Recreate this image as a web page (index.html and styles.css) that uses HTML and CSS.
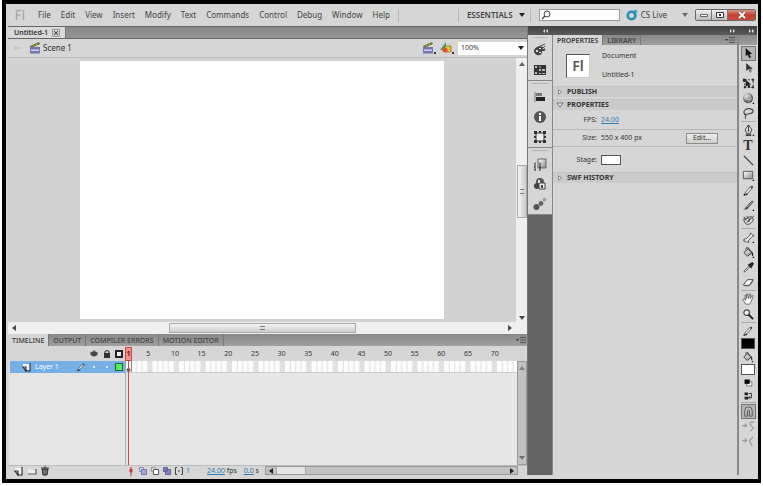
FILE: index.html
```html
<!DOCTYPE html>
<html lang="en">
<head>
<meta charset="utf-8">
<title>Untitled-1</title>
<link rel="stylesheet" href="styles.css">
</head>
<body>
<svg class="defs" aria-hidden="true">
  <defs>
    <radialGradient id="ball" cx=".35" cy=".3" r=".8"><stop offset="0" stop-color="#eee"/><stop offset=".5" stop-color="#888"/><stop offset="1" stop-color="#333"/></radialGradient>
    <linearGradient id="sheen" x2="1" y2="1"><stop offset="0" stop-color="#fff"/><stop offset="1" stop-color="#888"/></linearGradient>
  </defs>
  <symbol id="clap" viewBox="0 0 12 12"><path d="M1 4 10 0l1 2-9 4z" fill="#6b7426"/><path d="M4 3.500 5 4M7 2l1 1" stroke="#c5bd55"/><path d="M1 5h10v6.500H1z" fill="#7774b4"/><path d="M2 7.500h8V9H2z" fill="#d5d2ee"/></symbol>
  <symbol id="shapes" viewBox="0 0 12 12"><path d="M0 8 6 0v8z" fill="#35a06d"/><path d="M5 4h6v6H5z" fill="#ddc52f" stroke="#82721e" stroke-width=".7"/><circle cx="5" cy="8" r="2.5" fill="#e64e2b"/></symbol>
  <symbol id="eye" viewBox="0 0 10 10"><path d="M1 5q4-6 8 0-4 5-8 0z" fill="#444"/><path d="M1 3l2 1M9 3 7 4M5 1v2" stroke="#444" stroke-width=".7"/></symbol>
  <symbol id="lock" viewBox="0 0 10 10"><path d="M3 5V3q2-3 4 0v2" fill="none" stroke="#333" stroke-width="1.2"/><path d="M2 4h6v5H2z" fill="#333"/></symbol>
  <symbol id="page" viewBox="0 0 10 10"><path d="M1 2h7v6H4L1 5z" fill="#f4f4f4"/><path d="M8 1v8H3M1 5h3v4z" fill="none" stroke="#333" stroke-width="1.2"/></symbol>
  <symbol id="folder" viewBox="0 0 10 10"><path d="M1 8V3h3l1 1h4v4z" fill="#eee"/><path d="M1 8h8V3" fill="none" stroke="#555" stroke-width="1.2"/></symbol>
  <symbol id="trash" viewBox="0 0 10 10"><path d="M2 3h6L7 9H3zM1 2h8M4 1h2" fill="#555" stroke="#333"/><path d="M4 4v4M6 4v4" stroke="#bbb" stroke-width=".6"/></symbol>
  <symbol id="pencil" viewBox="0 0 14 14"><path d="M2 12q1-3 7-9l2 1q-4 7-9 8z" fill="#eee" stroke="#444" stroke-width=".9"/><path d="M9 3l2-1 1 1-1 2z" fill="#444"/><path d="M2 12l4-1" stroke="#222" stroke-width="1.3"/></symbol>
  <symbol id="arrow" viewBox="0 0 14 14"><path d="M4 1v9l2-2 2 4 1.600-1L8 7.500h3z" fill="#111"/></symbol>
  <symbol id="subarrow" viewBox="0 0 14 14"><path d="M5 2v7l2-2 2 4 1-1-1.500-3H11z" fill="#eee" stroke="#222" stroke-width=".8"/><path d="M5 2v6l5-1z" fill="#333"/></symbol>
  <symbol id="transform" viewBox="0 0 14 14"><path d="M3 3h9v8H3z" fill="none" stroke="#222" stroke-dasharray="2 1.500"/><path d="M1 2h3v3H1zM11 2h2v2h-2zM11 10h2v2h-2zM2 10h2v2H2z" fill="#222"/><path d="M4 3v8l2-2 1 3 2-1-1-3h2z" fill="#222"/></symbol>
  <symbol id="rotate3d" viewBox="0 0 14 14"><circle cx="6.500" cy="6.500" r="5.500" fill="url(#ball)"/><path d="M2 6q5 4 9 1M7 2q4 4 0 9" fill="none" stroke="#ddd" stroke-width=".7"/><path d="M11 13h2v-2z"/></symbol>
  <symbol id="lasso" viewBox="0 0 14 14"><path d="M3 8C0 4 5 1 9 2s4 4 0 5-5 1-6 1 2 1 1 2-1 1 0 3" fill="none" stroke="#444" stroke-width="1.200"/></symbol>
  <symbol id="pen" viewBox="0 0 14 14"><path d="M7 1 3.500 6 5 10h4l1.500-4z" fill="#eee" stroke="#333"/><path d="M7 1v6" stroke="#333"/><circle cx="7" cy="7" r="1" fill="#333"/><path d="M4 11h6v2H4z" fill="#444"/><path d="M11 13h2v-2z"/></symbol>
  <symbol id="line" viewBox="0 0 14 14"><path d="M2 2l10 10" stroke="#333" stroke-width="1.200"/></symbol>
  <symbol id="rect" viewBox="0 0 14 14"><path d="M1.500 2.500h10v8h-10z" fill="url(#sheen)" stroke="#555"/><path d="M11 13h2v-2z"/></symbol>
  <symbol id="brush" viewBox="0 0 14 14"><path d="M6 7l5-5 1 1-5 6z" fill="#999" stroke="#333" stroke-width=".8"/><path d="M1 11q3 0 3-3l3 1q0 3-6 2z" fill="#444"/><path d="M11 13h2v-2z"/></symbol>
  <symbol id="deco" viewBox="0 0 14 14"><path d="M2 5c2 1 2 0 4-1 3-2 6-1 6 2s-5 6-7 5-3-3-3-6z" fill="#ddd" stroke="#333"/><path d="M13 2 5 9M2 3l3 4M5 2l2 4M9 4l-2 5" stroke="#333" stroke-width=".9"/></symbol>
  <symbol id="bone" viewBox="0 0 14 14"><path d="M2 9l3-1 4-4V2l2 2 2 1-2 1-4 4 0 2-2 0-1-1-2 0z" fill="#eee" stroke="#444"/><path d="M11 13h2v-2z"/></symbol>
  <symbol id="bucket" viewBox="0 0 14 14"><path d="M2 7l5-4 4 4-5 4z" fill="url(#sheen)" stroke="#333"/><path d="M4 4q0-3 3-2l2 4" fill="none" stroke="#333"/><path d="M10 6q4 3 1 5z" fill="#222"/><path d="M11 13h2v-2z"/></symbol>
  <symbol id="dropper" viewBox="0 0 14 14"><path d="M2 12l1-2 5-5 1 1-5 5z" fill="#ddd" stroke="#444" stroke-width=".8"/><path d="M6 4l4 4 1-2 2-3-2-2-3 2z" fill="#222"/></symbol>
  <symbol id="eraser" viewBox="0 0 14 14"><path d="M1.500 9.500 6 4h6l-4 6H2z" fill="#fff" stroke="#333"/><path d="M2 10h6l4-6v2l-4 5H2z" fill="#666"/></symbol>
  <symbol id="hand" viewBox="0 0 14 14"><path d="M4 12 1 7l1-1 2 2-1-5 1-1 1 4 0-5h1l1 5 1-5h1v5l2-4 1 1-2 6-2 3z" fill="#fff" stroke="#555" stroke-width=".9"/></symbol>
  <symbol id="magnify" viewBox="0 0 14 14"><circle cx="5" cy="5" r="3" fill="#eee" stroke="#444" stroke-width="1.200"/><path d="M7 7l5 5" stroke="#222" stroke-width="2"/></symbol>
  <symbol id="bw" viewBox="0 0 14 14"><path d="M5.500 5.500h6v5h-6z" fill="#fff" stroke="#666"/><path d="M3 3h6v5H3z"/></symbol>
  <symbol id="swap" viewBox="0 0 14 14"><path d="M3 3h4v3H3zM3 8h4v3H3z" fill="#222"/><path d="M8 4h3v5H8m1-2L7.500 9 9 11" fill="none" stroke="#222"/></symbol>
  <symbol id="snap" viewBox="0 0 14 14"><path d="M3 12V6q0-4 4-4t4 4v6H8V6Q7 4 6 6v6z" fill="#bbb" stroke="#555"/></symbol>
  <symbol id="smooth" viewBox="0 0 14 14"><path d="M0 6h5M3 4l2 2-2 2M13 2Q7 2 9 5t3 3-3 4" fill="none" stroke="#999" stroke-width="1.200"/></symbol>
  <symbol id="straight" viewBox="0 0 14 14"><path d="M0 6h5M3 4l2 2-2 2M12 2 8 6l3 6" fill="none" stroke="#999" stroke-width="1.200"/></symbol>
  <symbol id="palette" viewBox="0 0 14 14"><path d="M1 8c0-3 5-6 9-4 4 3 2 4 0 4s0 3-3 4-6-1-6-4z" fill="#444"/><path d="M3 7h2v2H3zM6 5h2v1H6zM6 9h2v1H6zM9 5h2v1H9z" fill="#ddd"/><path d="M5 4l7-3M7 8l5-5" stroke="#555"/></symbol>
  <symbol id="swatches" viewBox="0 0 14 14"><path d="M1 2h12v10H1z" fill="#333"/><path d="M2 3h2v2H2zM2 9h2v2H2zM6 6h2v2H6zM9 6h3v2H9zM6 10h2v1H6zM9 10h3v1H9z" fill="#bbb"/><path d="M6 3h2v2H6z" fill="#777"/></symbol>
  <symbol id="align" viewBox="0 0 14 14"><path d="M2 2v10" stroke="#777"/><path d="M3 3h6v3H3z" fill="#777"/><path d="M3 7h9v4H3z" fill="#222"/></symbol>
  <symbol id="info" viewBox="0 0 14 14"><circle cx="7" cy="7" r="6" fill="#555"/><path d="M6 3h2v2H6zM6 6h2v5H6z" fill="#fff"/></symbol>
  <symbol id="box" viewBox="0 0 14 14"><path d="M3 3h8v8H3z" fill="#eee" stroke="#333"/><path d="M1 1h3v3H1zM6 1h2v2H6zM10 1h3v3h-3zM1 6h2v2H1zM11 6h2v2h-2zM1 10h3v3H1zM6 11h2v2H6zM10 10h3v3h-3z" fill="#333"/></symbol>
  <symbol id="snippets" viewBox="0 0 14 14"><path d="M5 2h8v9H5z" fill="url(#sheen)" stroke="#666"/><path d="M3 6Q1 6 2 8T1 10q2 0 1 2t1 1M6 6q2 0 1 2t1 2q-2 0-1 2t-1 1" fill="none" stroke="#333"/></symbol>
  <symbol id="component" viewBox="0 0 14 14"><circle cx="7" cy="5" r="4" fill="#555"/><circle cx="4" cy="9" r="3" fill="#444"/><path d="M6 6h6v6H6z" fill="#eee" stroke="#444"/><path d="M8 8h2v3H8z" fill="#444"/><path d="M5 3h2v3H5z" fill="#ddd"/></symbol>
  <symbol id="motion" viewBox="0 0 14 14"><circle cx="3.500" cy="10" r="3" fill="#555"/><circle cx="8" cy="6.500" r="2.400" fill="#666"/><circle cx="11.500" cy="2.500" r="1.500" fill="#aaa" stroke="#777" stroke-width=".6"/></symbol>
  <symbol id="onion" viewBox="0 0 10 10"><path d="M1.500 1.500h4v4h-4z" fill="#d8d8ee" stroke="#8886b5"/><path d="M3.500 3.500h5v5h-5z" fill="#a9a7d3" stroke="#7674b5"/></symbol>
  <symbol id="onionline" viewBox="0 0 10 10"><path d="M1.500 1.500h4v4h-4z" fill="#ddd" stroke="#999"/><path d="M3.500 3.500h5v5h-5z" fill="#fff" stroke="#555"/></symbol>
  <symbol id="onionfull" viewBox="0 0 10 10"><path d="M1.500 1.500h4v4h-4zM3.500 3.500h5v5h-5z" fill="#8582b9" stroke="#6562a8"/></symbol>
  <symbol id="brackets" viewBox="0 0 10 10"><path d="M3 1.500H1.500v7H3M7 1.500h1.500v7H7M4 5h2" fill="none" stroke="#444"/></symbol>
  <symbol id="menu" viewBox="0 0 10 6"><path d="M0 2h3L1.500 4z" fill="#333"/><path d="M4 .500h6M4 3h6M4 5.500h6" stroke="#444" stroke-width=".8"/></symbol>
  <symbol id="down" viewBox="0 0 6 4"><path d="M0 0h6L3 4z" fill="#222"/></symbol>
  <symbol id="up" viewBox="0 0 6 4"><path d="M0 4h6L3 0z" fill="#444"/></symbol>
  <symbol id="left" viewBox="0 0 4 6"><path d="M4 0v6L0 3z" fill="#222"/></symbol>
  <symbol id="right" viewBox="0 0 4 6"><path d="M0 0v6l4-3z" fill="#222"/></symbol>
  <symbol id="twist" viewBox="0 0 6 8"><path d="M1 1v6l4-3z" fill="#eee" stroke="#666" stroke-width=".9"/></symbol>
  <symbol id="twistopen" viewBox="0 0 8 6"><path d="M1 1h6L4 5z" fill="#eee" stroke="#666" stroke-width=".9"/></symbol>
  <symbol id="chev" viewBox="0 0 6 4"><path d="M0 0l2 2-2 2zM3 0l2 2-2 2z" fill="#ddd"/></symbol>
  <symbol id="chevl" viewBox="0 0 6 4"><path d="M2 0 0 2l2 2zM5 0 3 2l2 2z" fill="#ddd"/></symbol>
</svg>

<div class="app">
  <header class="menubar">
    <svg class="logo" viewBox="0 0 10 12" role="img" aria-label="Fl"><path d="M1.500 11V1.500h5M1.500 6h4M8.500 1v10" fill="none" stroke="#aaa" stroke-width="1.500"/></svg>
    <nav class="menus">
      <button>File</button><button>Edit</button><button>View</button><button>Insert</button><button>Modify</button><button>Text</button><button>Commands</button><button>Control</button><button>Debug</button><button>Window</button><button>Help</button>
    </nav>
    <span class="rule"></span>
    <span class="grow"></span>
    <span class="rule"></span>
    <button class="workspace">ESSENTIALS <svg class="tri"><use href="#down"/></svg></button>
    <span class="rule"></span>
    <label class="search"><svg viewBox="0 0 10 10"><circle cx="6" cy="4" r="3" fill="none" stroke="#444"/><path d="M4 6 1 9" stroke="#444" stroke-width="1.300"/></svg><input type="text" aria-label="Search"></label>
    <button class="live"><svg class="ring" viewBox="0 0 12 12"><circle cx="5.500" cy="6.500" r="3.800" fill="none" stroke="#248caf" stroke-width="2.600"/><circle cx="9.500" cy="2.500" r="1.800" fill="#3da2c2"/></svg>CS Live <svg class="tri pale"><use href="#down"/></svg></button>
    <div class="winbtns">
      <button aria-label="Minimize"><svg viewBox="0 0 10 8"><path d="M1.500 3.500h7v2h-7z" fill="#fff" stroke="#444" stroke-width=".8"/></svg></button>
      <button aria-label="Restore"><svg viewBox="0 0 10 8"><path d="M1.500 1.500h7v5h-7z" fill="#fff" stroke="#333"/><path d="M4 3h2v2H4z" fill="#333"/></svg></button>
      <button class="close" aria-label="Close"><svg viewBox="0 0 10 8"><path d="M2 1l6 6M8 1 2 7" stroke="#6b3b36" stroke-width="3"/><path d="M2 1l6 6M8 1 2 7" stroke="#fff" stroke-width="1.800"/></svg></button>
    </div>
  </header>

  <main class="work">
    <div class="left">
      <div class="doctabs"><button class="doctab">Untitled-1 <svg viewBox="0 0 8 8"><path d="M.500.500h7v7h-7z" fill="#ccc" stroke="#999"/><path d="M2 2l4 4M6 2 2 6" stroke="#444"/></svg></button></div>
      <div class="scenebar">
        <svg class="back" viewBox="0 0 8 6"><path d="M3 1 1 3l2 2M1 3h7" fill="none" stroke="#bbb"/></svg>
        <svg class="i12"><use href="#clap"/></svg><span class="scene">Scene 1</span>
        <span class="grow"></span>
        <button class="drop" aria-label="Edit scene"><svg class="i12"><use href="#clap"/></svg></button>
        <button class="drop" aria-label="Edit symbols"><svg class="i12"><use href="#shapes"/></svg></button>
        <div class="zoombox"><select aria-label="Zoom"><option>100%</option></select><svg class="tri"><use href="#down"/></svg></div>
      </div>
      <div class="stagewrap">
        <div class="paste"><div class="stage"></div></div>
        <div class="vbar"><svg class="tri"><use href="#up"/></svg><div class="vthumb"><i></i></div><svg class="tri"><use href="#down"/></svg></div>
        <div class="hbar"><svg class="side"><use href="#left"/></svg><div class="hthumb"><i></i></div><svg class="side"><use href="#right"/></svg></div>
        <div class="corner"></div>
      </div>
      <section class="timeline">
        <div class="tabs tl"><button class="on">TIMELINE</button><button>OUTPUT</button><button>COMPILER ERRORS</button><button>MOTION EDITOR</button><span class="grow"></span><svg class="menu"><use href="#menu"/></svg></div>
        <div class="tlgrid">
          <div class="layerhead"><svg class="i10"><use href="#eye"/></svg><svg class="i10"><use href="#lock"/></svg><span class="outline"></span></div>
          <div class="ruler"><span>5</span><span>10</span><span>15</span><span>20</span><span>25</span><span>30</span><span>35</span><span>40</span><span>45</span><span>50</span><span>55</span><span>60</span><span>65</span><span>70</span></div>
          <div class="layers">
            <div class="layer"><svg class="i10"><use href="#page"/></svg><span class="name">Layer 1</span><svg class="i10"><use href="#pencil"/></svg><span class="dot"></span><span class="dot"></span><span class="outline green"></span></div>
          </div>
          <div class="frames">
            <svg class="strip"><defs><pattern id="cells" width="26.5" height="12" patternUnits="userSpaceOnUse"><path d="M0 0h26.500v12H0z" fill="#fdfdfd"/><path d="M21.200 0h5.300v12h-5.300z" fill="#e1e1e1"/><path d="M5.300 0v12M10.600 0v12M15.900 0v12" stroke="#ddd"/></pattern></defs><rect width="100%" height="12" fill="url(#cells)"/><circle cx="2.500" cy="9" r="1.500" fill="none" stroke="#333"/><path d="M5.500 0v12" stroke="#888"/></svg>
          </div>
          <div class="tlv"><svg class="tri"><use href="#up"/></svg><svg class="tri"><use href="#down"/></svg></div>
          <div class="layerfoot"><button aria-label="New layer"><svg class="i10"><use href="#page"/></svg></button><button aria-label="New folder"><svg class="i10"><use href="#folder"/></svg></button><button aria-label="Delete"><svg class="i10"><use href="#trash"/></svg></button></div>
          <div class="framefoot">
            <svg class="i10" viewBox="0 0 10 10"><path d="M5 1v9" stroke="#cf3340"/><path d="M4 3h2v3H4z" fill="#cf3340" stroke="#cf3340"/></svg>
            <svg class="i10"><use href="#onion"/></svg><svg class="i10"><use href="#onionline"/></svg><svg class="i10"><use href="#onionfull"/></svg><svg class="i10"><use href="#brackets"/></svg>
            <span class="cur">1</span><span class="rate"><a href="#fps">24.00</a> fps</span><span><a href="#time">0.0</a> s</span>
            <div class="tlh"><svg class="side"><use href="#left"/></svg><div class="tlthumb"></div><svg class="side"><use href="#right"/></svg></div>
          </div>
          <div class="playhead"><b>1</b><span></span></div>
        </div>
      </section>
    </div>

    <aside class="dock">
      <div class="dark"><svg class="chev"><use href="#chevl"/></svg></div>
      <div class="group"><button aria-label="Color"><svg><use href="#palette"/></svg></button><button aria-label="Swatches"><svg><use href="#swatches"/></svg></button></div>
      <div class="group"><button aria-label="Align"><svg><use href="#align"/></svg></button><button aria-label="Info"><svg><use href="#info"/></svg></button><button aria-label="Transform"><svg><use href="#box"/></svg></button></div>
      <div class="group"><button aria-label="Code snippets"><svg><use href="#snippets"/></svg></button><button aria-label="Components"><svg><use href="#component"/></svg></button><button aria-label="Motion presets"><svg><use href="#motion"/></svg></button></div>
    </aside>

    <aside class="props">
      <div class="dark"><svg class="chev"><use href="#chev"/></svg></div>
      <div class="tabs"><button class="on">PROPERTIES</button><button>LIBRARY</button><span class="grow"></span><svg class="menu"><use href="#menu"/></svg></div>
      <div class="dochead"><div class="fl">Fl</div><div class="docname"><span>Document</span><span>Untitled-1</span></div></div>
      <button class="sec"><svg class="tw"><use href="#twist"/></svg>PUBLISH</button>
      <button class="sec"><svg class="tw"><use href="#twistopen"/></svg>PROPERTIES</button>
      <div class="row"><span class="lab">FPS:</span><a href="#fps">24.00</a></div>
      <div class="row size"><span class="lab">Size:</span><span>550 x 400 px</span><button class="edit">Edit...</button></div>
      <div class="row last"><span class="lab">Stage:</span><button class="color" aria-label="Stage color"></button></div>
      <button class="sec"><svg class="tw"><use href="#twist"/></svg>SWF HISTORY</button>
    </aside>

    <aside class="tools">
      <div class="dark"><svg class="chev"><use href="#chev"/></svg></div>
      <div class="toolhead"></div>
      <div class="toollist">
        <button class="sel" aria-label="Selection"><svg><use href="#arrow"/></svg></button>
        <button aria-label="Subselection"><svg><use href="#subarrow"/></svg></button>
        <button aria-label="Free transform"><svg><use href="#transform"/></svg></button>
        <button aria-label="3D rotation"><svg><use href="#rotate3d"/></svg></button>
        <button aria-label="Lasso"><svg><use href="#lasso"/></svg></button>
        <hr>
        <button aria-label="Pen"><svg><use href="#pen"/></svg></button>
        <button class="text" aria-label="Text">T</button>
        <button aria-label="Line"><svg><use href="#line"/></svg></button>
        <button aria-label="Rectangle"><svg><use href="#rect"/></svg></button>
        <button aria-label="Pencil"><svg><use href="#pencil"/></svg></button>
        <button aria-label="Brush"><svg><use href="#brush"/></svg></button>
        <button aria-label="Deco"><svg><use href="#deco"/></svg></button>
        <hr>
        <button aria-label="Bone"><svg><use href="#bone"/></svg></button>
        <button aria-label="Paint bucket"><svg><use href="#bucket"/></svg></button>
        <button aria-label="Eyedropper"><svg><use href="#dropper"/></svg></button>
        <button aria-label="Eraser"><svg><use href="#eraser"/></svg></button>
        <hr>
        <button aria-label="Hand"><svg><use href="#hand"/></svg></button>
        <button aria-label="Zoom"><svg><use href="#magnify"/></svg></button>
        <hr>
        <button class="short" aria-label="Stroke"><svg><use href="#pencil"/></svg></button>
        <button class="swatch black" aria-label="Stroke color"></button>
        <button class="short" aria-label="Fill"><svg><use href="#bucket"/></svg></button>
        <button class="swatch" aria-label="Fill color"></button>
        <button class="short" aria-label="Black and white"><svg><use href="#bw"/></svg></button>
        <button class="short" aria-label="Swap colors"><svg><use href="#swap"/></svg></button>
        <hr>
        <button class="sel" aria-label="Snap to objects"><svg><use href="#snap"/></svg></button>
        <button aria-label="Smooth"><svg><use href="#smooth"/></svg></button>
        <button aria-label="Straighten"><svg><use href="#straight"/></svg></button>
      </div>
    </aside>
  </main>
</div>
</body>
</html>
```
FILE: styles.css
```css
* { box-sizing: border-box; }
body { margin: 0; padding: 0 2px 3px; background: #fff; font: 8px/12px "Noto Sans", "Open Sans", sans-serif; color: #333; }
button, input, select { font: inherit; color: inherit; margin: 0; padding: 0; border: 0; background: none; }
button { display: flex; align-items: center; white-space: nowrap; }
svg { display: block; flex: none; }
a { color: #2f7cb5; }
hr { margin: 0; border: 0; }
.defs { position: absolute; width: 0; height: 0; }
.grow { flex: 1; }
.i10 { width: 10px; height: 10px; }
.i12 { width: 12px; height: 12px; }
.tri { width: 6px; height: 4px; }
.side { width: 4px; height: 6px; }
.chev { width: 6px; height: 4px; }
.menu { width: 10px; height: 6px; }

.app { display: flex; flex-direction: column; min-height: calc(100vh - 3px); border: 4px solid #000; border-right-width: 3px; background: #d6d6d6; padding: 0 1px 4px 2px; }

.menubar { display: flex; align-items: center; height: 22px; padding: 0 1px 0 7px; color: #444; }
.logo { width: 10px; height: 12px; margin-right: 13px; }
.menus { display: flex; gap: 10px; margin-right: 8px; }
.rule { width: 1px; height: 13px; background: #b4b4b4; }
.workspace { gap: 6px; margin: 0 5px 0 8px; font-weight: 600; }
.search { display: flex; align-items: center; width: 81px; height: 12px; margin: 0 6px 0 8px; padding: 0 1px; background: #fff; border: 1px solid #999; }
.search svg { width: 10px; height: 10px; }
.search input { flex: 1; min-width: 0; height: 10px; }
.live { gap: 3px; margin-right: 7px; }
.ring { width: 12px; height: 12px; }
.pale { margin-left: 12px; opacity: .6; }
.winbtns { display: flex; height: 12px; border: 1px solid #666; border-radius: 2px; overflow: hidden; }
.winbtns button { width: 16px; justify-content: center; background: linear-gradient(#eee, #bbb); border-right: 1px solid #777; }
.winbtns svg { width: 10px; height: 8px; }
.winbtns .close { width: 27px; border: 0; background: linear-gradient(#dc9489, #c44130 50%, #c94f3b); }

.work { flex: 1; display: grid; grid-template-columns: minmax(0, 1fr) 24px 187px 18px; background: #646464; }
.left { display: flex; flex-direction: column; min-width: 0; border-right: 1px solid #777; background: #d6d6d6; }
.doctabs { display: flex; height: 13px; background: linear-gradient(#878787, #959595); border-top: 1px solid #666; border-bottom: 1px solid #666; }
.doctab { gap: 4px; padding: 0 5px 0 6px; background: #d9d9d9; font-size: 7px; font-weight: 600; border-right: 1px solid #777; }
.doctab svg { width: 8px; height: 8px; }
.scenebar { display: flex; align-items: center; height: 19px; padding-left: 5px; border-bottom: 1px solid #bbb; }
.back { width: 8px; height: 6px; margin-right: 8px; }
.scene { margin-left: 2px; }
.drop { position: relative; margin-right: 6px; }
.drop::after { content: ""; position: absolute; right: -2px; bottom: 0; width: 2px; height: 2px; background: #333; }
.zoombox { display: flex; align-items: center; width: 69px; height: 13px; padding: 0 3px; background: #fff; }
.zoombox select { flex: 1; appearance: none; font-size: 7px; }

.stagewrap { display: grid; grid-template: 264px 12px / minmax(0, 1fr) 11px; }
.paste { padding: 3px 72px; background: #d2d2d2; }
.stage { height: 258px; background: #fff; }
.vbar, .hbar { display: flex; align-items: center; justify-content: space-between; background: #efefef; }
.vbar { flex-direction: column; padding: 4px 0 2px; }
.vbar .tri, .hbar .side { opacity: .8; }
.vthumb { display: grid; place-items: center; width: 10px; height: 53px; border: 1px solid #aaa; background: linear-gradient(90deg, #f4f4f4, #ccc); }
.vthumb i { width: 4px; height: 5px; border: solid #777; border-width: 1px 0; }
.hbar { padding: 0 4px; }
.hthumb { display: grid; place-items: center; width: 187px; height: 10px; border: 1px solid #aaa; background: linear-gradient(#f4f4f4, #ccc); }
.hthumb i { width: 5px; height: 4px; border: solid #777; border-width: 1px 0; }
.corner { background: #efefef; }

.tabs { display: flex; align-items: stretch; height: 11px; padding-right: 2px; background: linear-gradient(#878787, #a0a0a0); font-size: 7px; line-height: 9px; color: #444; }
.tabs button { padding: 0 5px; border-right: 1px solid #777; font-weight: 600; }
.tabs .on { background: #d6d6d6; color: #333; }
.tabs .menu { align-self: center; }
.tl { height: 12px; padding-right: 1px; }
.timeline .tl button { padding: 0 4px; font-weight: 500; }
.timeline { flex: 1; display: flex; flex-direction: column; }
.tlgrid { position: relative; flex: 1; display: grid; grid-template: 15px minmax(0, 1fr) 10px / 118px minmax(0, 1fr) 10px; background: #d6d6d6; }
.layerhead { display: flex; align-items: center; justify-content: flex-end; gap: 3px; padding-right: 3px; }
.outline { width: 8px; height: 8px; border: 2px solid #222; background: #eee; }
.ruler { grid-column: 2 / 4; display: flex; margin: 0 19px 0 9px; align-items: center; font-size: 7px; }
.ruler span { flex: 1; text-align: center; }
.layers, .frames { background: #e6e6e6; }
.layers { border-left: 2px solid #ddd; border-right: 1px solid #9ab4bf; }
.layer { display: flex; align-items: center; height: 12px; padding: 0 2px 0 12px; background: #76aee6; color: #fff; gap: 3px; }
.layer .name { flex: 1; font-size: 7px; }
.dot { width: 2px; height: 2px; margin: 0 4px; background: #fff; border-radius: 1px; }
.green { border: 1px solid #27643a; background: #57ee5c; }
.strip { width: 100%; height: 12px; border-bottom: 1px solid #ccc; }
.tlv { display: flex; flex-direction: column; justify-content: space-between; align-items: center; padding: 4px 0; border: 1px solid #999; background: #c1c1c1; }
.tlv svg { opacity: .5; }
.layerfoot, .framefoot { display: flex; align-items: center; border-top: 1px solid #bbb; }
.layerfoot { padding-left: 6px; gap: 3px; }
.framefoot { grid-column: 2 / 4; gap: 2px; font-size: 7px; line-height: 8px; }
.cur { color: #2f7cb5; margin-right: 15px; }
.rate { margin-right: 5px; }
.tlh { flex: 1; display: flex; align-items: center; justify-content: space-between; height: 9px; margin: 0 9px 0 4px; padding-right: 3px; border: 1px solid #999; background: #c1c1c1; }
.tlh .side:first-child { margin: 0 3px; }
.tlthumb { width: 30px; height: 7px; margin-right: auto; background: #e5e5e5; border: solid #aaa; border-width: 0 1px; }
.playhead { position: absolute; left: 117px; top: 1px; bottom: 10px; width: 7px; display: flex; flex-direction: column; align-items: center; color: #811; font-size: 7px; }
.playhead b { width: 7px; height: 14px; border: 1px solid #c44; background: #ee918b; text-align: center; }
.playhead span { flex: 1; width: 1px; background: #cf4650; }

.dark { display: flex; align-items: center; justify-content: flex-end; height: 9px; padding-right: 3px; background: linear-gradient(#414141, #5a5a5a); }
.group { padding: 5px 0 0; background: #d6d6d6; border-bottom: 1px solid #888; position: relative; }
.group + .group { padding-top: 6px; }
.group::before { content: ""; position: absolute; top: 2px; left: 4px; right: 4px; height: 1px; background: #b5b5b5; }
.group button { width: 100%; height: 20px; justify-content: center; }
.group svg { width: 14px; height: 14px; }

.props { display: flex; flex-direction: column; background: #d6d6d6; border: solid #888; border-width: 0 2px 0 1px; color: #333; }
.props .dark { margin: 0 -2px 0 -1px; }
.props .tabs { height: 10px; }
.props .tabs button { padding: 0 4px; }
.dochead { display: flex; align-items: center; gap: 12px; height: 41px; padding-left: 13px; font-size: 7px; }
.fl { width: 24px; height: 24px; border: 1px solid #555; border-right-color: #ccc; border-bottom-color: #ccc; background: #fff; color: #555; font-size: 14px; line-height: 21px; font-weight: 600; text-align: center; }
.docname { display: flex; flex-direction: column; gap: 7px; }
.sec { gap: 3px; height: 11px; padding-left: 3px; background: #cbcbcb; border-top: 1px solid #c2c2c2; font-size: 7px; font-weight: 700; }
.sec + .sec { margin-top: 2px; }
.tw { width: 8px; height: 6px; }
.row { display: flex; align-items: center; gap: 4px; height: 20px; border-bottom: 1px solid #b9b9b9; font-size: 7px; }
.lab { width: 44px; text-align: right; }
.size { height: 17px; }
.edit { justify-content: center; width: 32px; height: 11px; margin: 0 19px 0 auto; border: 1px solid #8c8c8c; background: linear-gradient(#eee, #ccc); }
.last { height: 25px; border: 0; }
.color { width: 20px; height: 10px; border: 1px solid #555; background: #fff; }

.tools { display: flex; flex-direction: column; background: #d6d6d6; }
.tools .dark { padding-right: 2px; }
.toolhead { height: 10px; background: linear-gradient(#878787, #a0a0a0); }
.toollist { display: flex; flex-direction: column; align-items: center; padding-top: 1px; }
.toollist button { width: 15px; height: 15px; justify-content: center; }
.toollist svg { width: 13px; height: 13px; }
.toollist hr { width: 15px; height: 2px; border-top: 1px solid #aaa; }
.toollist .sel { background: #b4b4b4; border: 1px solid #777; }
.toollist .text { font: 700 14px/14px "Liberation Serif", serif; }
.toollist .short { height: 13px; }
.toollist .short svg { width: 12px; height: 12px; }
.toollist .swatch { width: 14px; height: 11px; margin: 1px 0; border: 1px solid #555; background: #fff; }
.toollist .black { background: #000; }
```
